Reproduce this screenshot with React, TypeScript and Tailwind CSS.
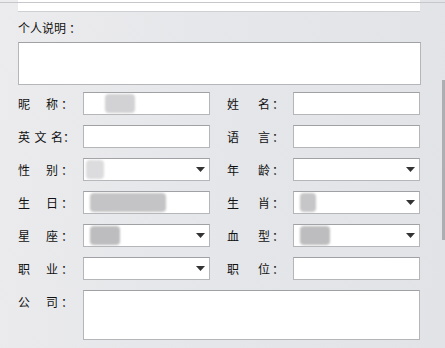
import React from "react";

const font = { fontFamily: '"Noto Sans CJK SC", "Noto Sans", sans-serif' };

function Label({ chars, w, cw, cm }: { chars: string[]; w: string; cw: string; cm: string }) {
  return (
    <div className={`flex items-center text-[12px] text-[#111] ${w}`}>
      <div className={`flex justify-between ${cw}`}>
        {chars.map((c, i) => (
          <span key={i}>{c}</span>
        ))}
      </div>
      <span className={cm}>：</span>
    </div>
  );
}

function Box({ select, blob }: { select?: boolean; blob?: React.ReactNode }) {
  return (
    <div className="relative h-[23px] w-[127px] bg-white border border-[#b4b6ba] border-t-[#9fa1a5] flex items-center">
      {blob}
      {select && (
        <svg className="absolute right-[4px] top-[8px]" width="9" height="5" viewBox="0 0 9 5">
          <path d="M0 0 L9 0 L4.5 5 Z" fill="#333" />
        </svg>
      )}
    </div>
  );
}

function Gray({ ml, w, c = "#c9c9cb" }: { ml: string; w: string; c?: string }) {
  return <div className={`${ml} ${w} h-[19px] rounded-[4px]`} style={{ background: c, filter: "blur(1px)" }} />;
}

function Row({
  l1,
  l2,
  b1,
  b2,
}: {
  l1: string[];
  l2: string[];
  b1: React.ReactNode;
  b2: React.ReactNode;
}) {
  const three = l1.length === 3;
  return (
    <div className="flex items-center h-[23px]">
      <Label
        chars={l1}
        w="w-[65px]"
        cw={three ? "w-[45px]" : "w-[40px]"}
        cm={three ? "ml-[0px]" : "ml-[3px]"}
      />
      {b1}
      <div className="w-[17px]" />
      <Label chars={l2} w="w-[66px]" cw="w-[43px]" cm="ml-[2px]" />
      {b2}
    </div>
  );
}

export default function App() {
  return (
    <div
      className="relative w-[445px] h-[348px] overflow-hidden"
      style={{
        ...font,
        background: "linear-gradient(100deg, #ececee 0%, #e6e7ea 40%, #e1e3e7 100%)",
      }}
    >
      <div className="absolute left-0 right-0 top-[2px] h-px bg-[#c6c7ca]" />
      <div className="absolute right-0 top-[80px] w-[3px] h-[160px] bg-[#acaeb2]" />
      <div className="px-[18px] flex flex-col">
        <div className="h-[12px] w-[402px] bg-white border-b border-[#cfd0d3]" />
        <div className="mt-[8px] text-[12px] text-[#111] leading-[16px]">
          个人说明<span className="ml-[3px]">：</span>
        </div>
        <div className="mt-[6px] h-[43px] w-[403px] bg-white border border-[#b4b6ba] border-t-[#9fa1a5]" />
        <div className="mt-[7px] flex flex-col gap-[10px]">
          <Row
            l1={["昵", "称"]}
            l2={["姓", "名"]}
            b1={<Box blob={<Gray ml="ml-[21px]" w="w-[30px]" c="#d2d2d4" />} />}
            b2={<Box />}
          />
          <Row l1={["英", "文", "名"]} l2={["语", "言"]} b1={<Box />} b2={<Box />} />
          <Row
            l1={["性", "别"]}
            l2={["年", "龄"]}
            b1={<Box select blob={<Gray ml="ml-[2px]" w="w-[18px]" c="#dcdcde" />} />}
            b2={<Box select />}
          />
          <Row
            l1={["生", "日"]}
            l2={["生", "肖"]}
            b1={<Box blob={<Gray ml="ml-[6px]" w="w-[76px]" c="#c4c4c6" />} />}
            b2={<Box select blob={<Gray ml="ml-[6px]" w="w-[16px]" c="#c6c6c8" />} />}
          />
          <Row
            l1={["星", "座"]}
            l2={["血", "型"]}
            b1={<Box select blob={<Gray ml="ml-[6px]" w="w-[30px]" c="#bdbdbf" />} />}
            b2={<Box select blob={<Gray ml="ml-[6px]" w="w-[30px]" c="#bdbdbf" />} />}
          />
          <Row l1={["职", "业"]} l2={["职", "位"]} b1={<Box select />} b2={<Box />} />
          <div className="flex items-start">
            <div className="pt-[3px]">
              <Label chars={["公", "司"]} w="w-[65px]" cw="w-[40px]" cm="ml-[3px]" />
            </div>
            <div className="h-[50px] w-[337px] bg-white border border-[#b4b6ba] border-t-[#9fa1a5]" />
          </div>
        </div>
      </div>
    </div>
  );
}
